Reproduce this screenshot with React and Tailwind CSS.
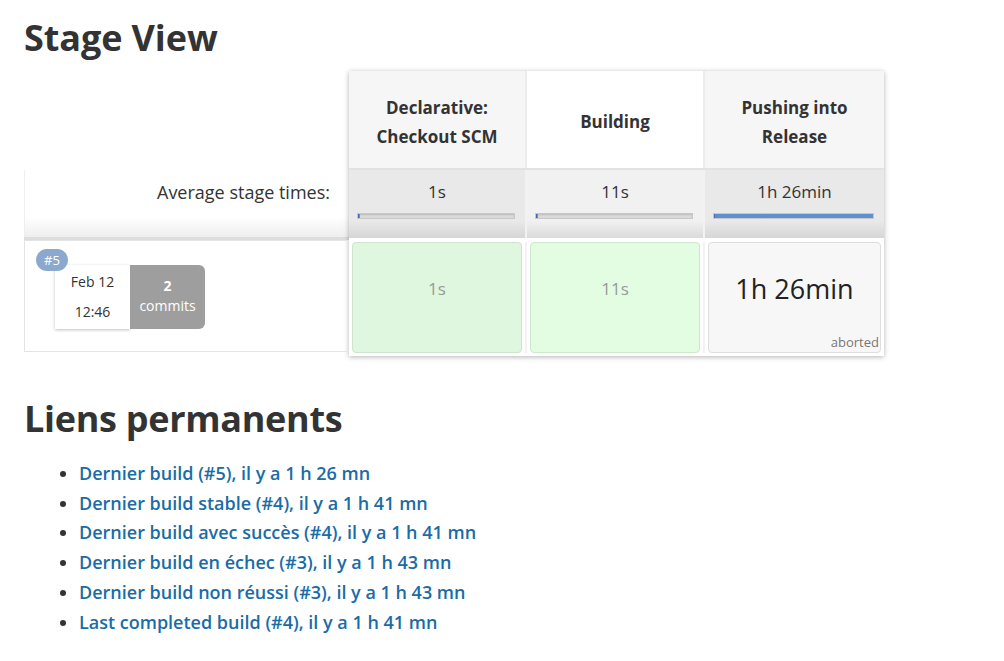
import React from "react";

const font = { fontFamily: '"Open Sans", "Noto Sans", sans-serif' };

function Bar({ pct }) {
  return (
    <div className="ml-2 mr-[10px] h-[6px] bg-[#dcdcdc] border border-[#c8c8c8] shadow-[inset_0_1px_2px_rgba(0,0,0,0.15)] relative">
      <div
        className="absolute left-0 top-0 bottom-0 bg-[#5f8fd1] border-l border-[#3a6ab8]"
        style={{ width: pct }}
      />
    </div>
  );
}

export default function App() {
  const links = [
    "Dernier build (#5), il y a 1 h 26 mn",
    "Dernier build stable (#4), il y a 1 h 41 mn",
    "Dernier build avec succès (#4), il y a 1 h 41 mn",
    "Dernier build en échec (#3), il y a 1 h 43 mn",
    "Dernier build non réussi (#3), il y a 1 h 43 mn",
    "Last completed build (#4), il y a 1 h 41 mn",
  ];
  return (
    <div className="w-[1004px] h-[661px] bg-white text-[#333] px-6 overflow-hidden" style={font}>
      <h1 className="text-[36px] font-bold leading-[44px] pt-[16px] tracking-[-0.1px]">Stage View</h1>

      <div className="mt-[10px] flex">
        {/* left column */}
        <div className="w-[325px] flex flex-col">
          <div className="h-[100px]" />
          <div className="h-[67px] bg-gradient-to-b from-white from-70% to-[#eeeeee] flex items-start justify-end pr-[19px] pt-[8px] border-l border-[#eee]">
            <span className="text-[18px] leading-[28px]">Average stage times:</span>
          </div>
          <div className="h-[3px] bg-[#dddddd]" />
          <div className="h-[112px] border border-[#e4e4e4] border-r-0 relative">
            <div className="absolute left-[11px] top-[8px] h-[22px] px-[8px] rounded-full bg-[#8ba9cf] text-white text-[13px] leading-[22px] z-10">
              #5
            </div>
            <div className="absolute left-[30px] top-[24px] flex h-[64px]">
              <div className="w-[75px] bg-white shadow-[0_1px_3px_rgba(0,0,0,0.25)] flex flex-col items-center justify-center text-[14px] leading-[30px]">
                <span>Feb 12</span>
                <span>12:46</span>
              </div>
              <div className="w-[75px] bg-[#9e9e9e] rounded-r-[6px] flex flex-col items-center justify-center text-white leading-[20px] pb-[2px]">
                <span className="text-[14px] font-bold">2</span>
                <span className="text-[14px]">commits</span>
              </div>
            </div>
          </div>
        </div>

        {/* stage table */}
        <div className="w-[535px] shadow-[0_1px_5px_rgba(0,0,0,0.3)] flex flex-col mt-[1px]">
          <div className="grid grid-cols-[178px_178px_179px] h-[97px]">
            <div className="bg-[#f6f6f6] border-r-2 border-[#ececec] flex items-center justify-center text-center font-bold text-[17px] leading-[29px] pt-[4px]">
              Declarative:<br />Checkout SCM
            </div>
            <div className="bg-white border-r-2 border-[#ececec] flex items-center justify-center text-center font-bold text-[17px] leading-[29px] pt-[4px]">
              Building
            </div>
            <div className="bg-[#f6f6f6] flex items-center justify-center text-center font-bold text-[17px] leading-[29px] pt-[4px]">
              Pushing into<br />Release
            </div>
          </div>
          <div className="grid grid-cols-[178px_178px_179px] h-[70px] border-t-2 border-[#e2e2e2]">
            <div className="bg-gradient-to-b from-[#e9e9e9] from-75% to-[#d6d6d6] border-r-2 border-[#f2f2f2] flex flex-col pt-[10px]">
              <div className="text-center text-[17px] leading-[24px]">1s</div>
              <div className="mt-[9px]"><Bar pct="1%" /></div>
            </div>
            <div className="bg-gradient-to-b from-[#f1f1f1] from-75% to-[#dadada] border-r-2 border-[#f2f2f2] flex flex-col pt-[10px]">
              <div className="text-center text-[17px] leading-[24px]">11s</div>
              <div className="mt-[9px]"><Bar pct="1%" /></div>
            </div>
            <div className="bg-gradient-to-b from-[#e9e9e9] from-75% to-[#d6d6d6] flex flex-col pt-[10px]">
              <div className="text-center text-[17px] leading-[24px]">1h 26min</div>
              <div className="mt-[9px]"><Bar pct="100%" /></div>
            </div>
          </div>
          <div className="grid grid-cols-[178px_178px_179px] h-[118px] bg-white pt-[4px] pb-[3px]">
            <div className="px-[3px] border-r-2 border-[#f2f2f2]">
              <div className="h-full rounded-[4px] bg-[#dff7df] border border-[#cfe4cf] flex items-center justify-center text-[17px] text-[#999] pb-[18px]">
                1s
              </div>
            </div>
            <div className="px-[3px] border-r-2 border-[#f2f2f2]">
              <div className="h-full rounded-[4px] bg-[#e3fde3] border border-[#cde8cd] flex items-center justify-center text-[17px] text-[#999] pb-[18px]">
                11s
              </div>
            </div>
            <div className="px-[3px]">
              <div className="h-full rounded-[4px] bg-[#f7f7f7] border border-[#dedede] relative flex items-center justify-center text-[27px] text-[#222]">
                <span className="-mt-[16px]">1h 26min</span>
                <span className="absolute right-[1px] bottom-[2px] text-[13px] text-[#777] leading-[16px]">aborted</span>
              </div>
            </div>
          </div>
        </div>
      </div>

      <h1 className="text-[36px] font-bold leading-[44px] mt-[41px] tracking-[-0.3px]">Liens permanents</h1>
      <ul className="mt-[18px] pl-[55px] list-disc">
        {links.map((l) => (
          <li key={l} className="text-[18px] leading-[29.7px] font-semibold marker:text-[#333]">
            <a className="text-[#1a6ca6]" href="#">{l}</a>
          </li>
        ))}
      </ul>
    </div>
  );
}
